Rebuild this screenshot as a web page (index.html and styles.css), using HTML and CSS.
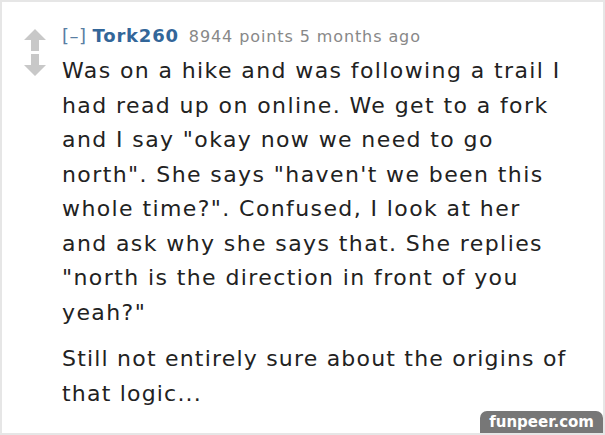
FILE: index.html
```html
<!DOCTYPE html>
<html>
<head>
<meta charset="utf-8">
<link rel="stylesheet" href="styles.css">
</head>
<body>
<div class="frame">
  <div class="comment">
    <div class="votes">
      <svg class="arrow" width="22" height="22" viewBox="0 0 22 22"><path d="M11 0 L22 11 L15 11 L15 22 L7 22 L7 11 L0 11 Z" fill="#c8c8c8"/></svg>
      <svg class="arrow" width="22" height="22" viewBox="0 0 22 22"><path d="M11 22 L22 11 L15 11 L15 0 L7 0 L7 11 L0 11 Z" fill="#c8c8c8"/></svg>
    </div>
    <div class="entry">
      <div class="tagline"><span class="toggle">[–]</span> <span class="author">Tork260</span> <span class="meta">8944 points 5 months ago</span></div>
      <div class="body">
        <p>Was on a hike and was following a trail I had read up on online. We get to a fork and I say "okay now we need to go north". She says "haven't we been this whole time?". Confused, I look at her and ask why she says that. She replies "north is the direction in front of you yeah?"</p>
        <p class="last">Still not entirely sure about the origins of that logic...</p>
      </div>
    </div>
  </div>
  <div class="watermark">funpeer.com</div>
</div>
</body>
</html>
```
FILE: styles.css
```css
html, body { margin: 0; padding: 0; background: #fff; }
.frame {
  width: 605px; height: 435px; box-sizing: border-box;
  border: 2px solid #e6e6e6;
  position: relative; overflow: hidden;
  font-family: Verdana, "DejaVu Sans", sans-serif;
}
.comment { display: flex; padding: 22px 0 0 22px; }
.votes { width: 38px; display: flex; flex-direction: column; gap: 3px; padding-top: 5px; }
.arrow { display: block; }
.entry { flex: 1; }
.tagline { font-size: 16px; line-height: 24px; color: #888; letter-spacing: 0.9px; }
.toggle { color: #5a7ea3; font-size: 18px; letter-spacing: 0.5px; }
.author { color: #369; font-weight: bold; font-size: 18px; letter-spacing: 0.8px; margin: 0 4px 0 0; }
.body { color: #222; font-size: 22px; line-height: 34.5px; margin-top: 5px; padding-right: 30px; letter-spacing: 1.4px; }
.body p { margin: 0 0 12px 0; }
.body p.last { letter-spacing: 1.2px; }
.watermark {
  position: absolute; right: 0; bottom: 0;
  background: #777; color: #fff; font-weight: bold; font-size: 15px;
  padding: 2px 9px 2px 9px; border-radius: 7px 7px 0 0;
}
```
